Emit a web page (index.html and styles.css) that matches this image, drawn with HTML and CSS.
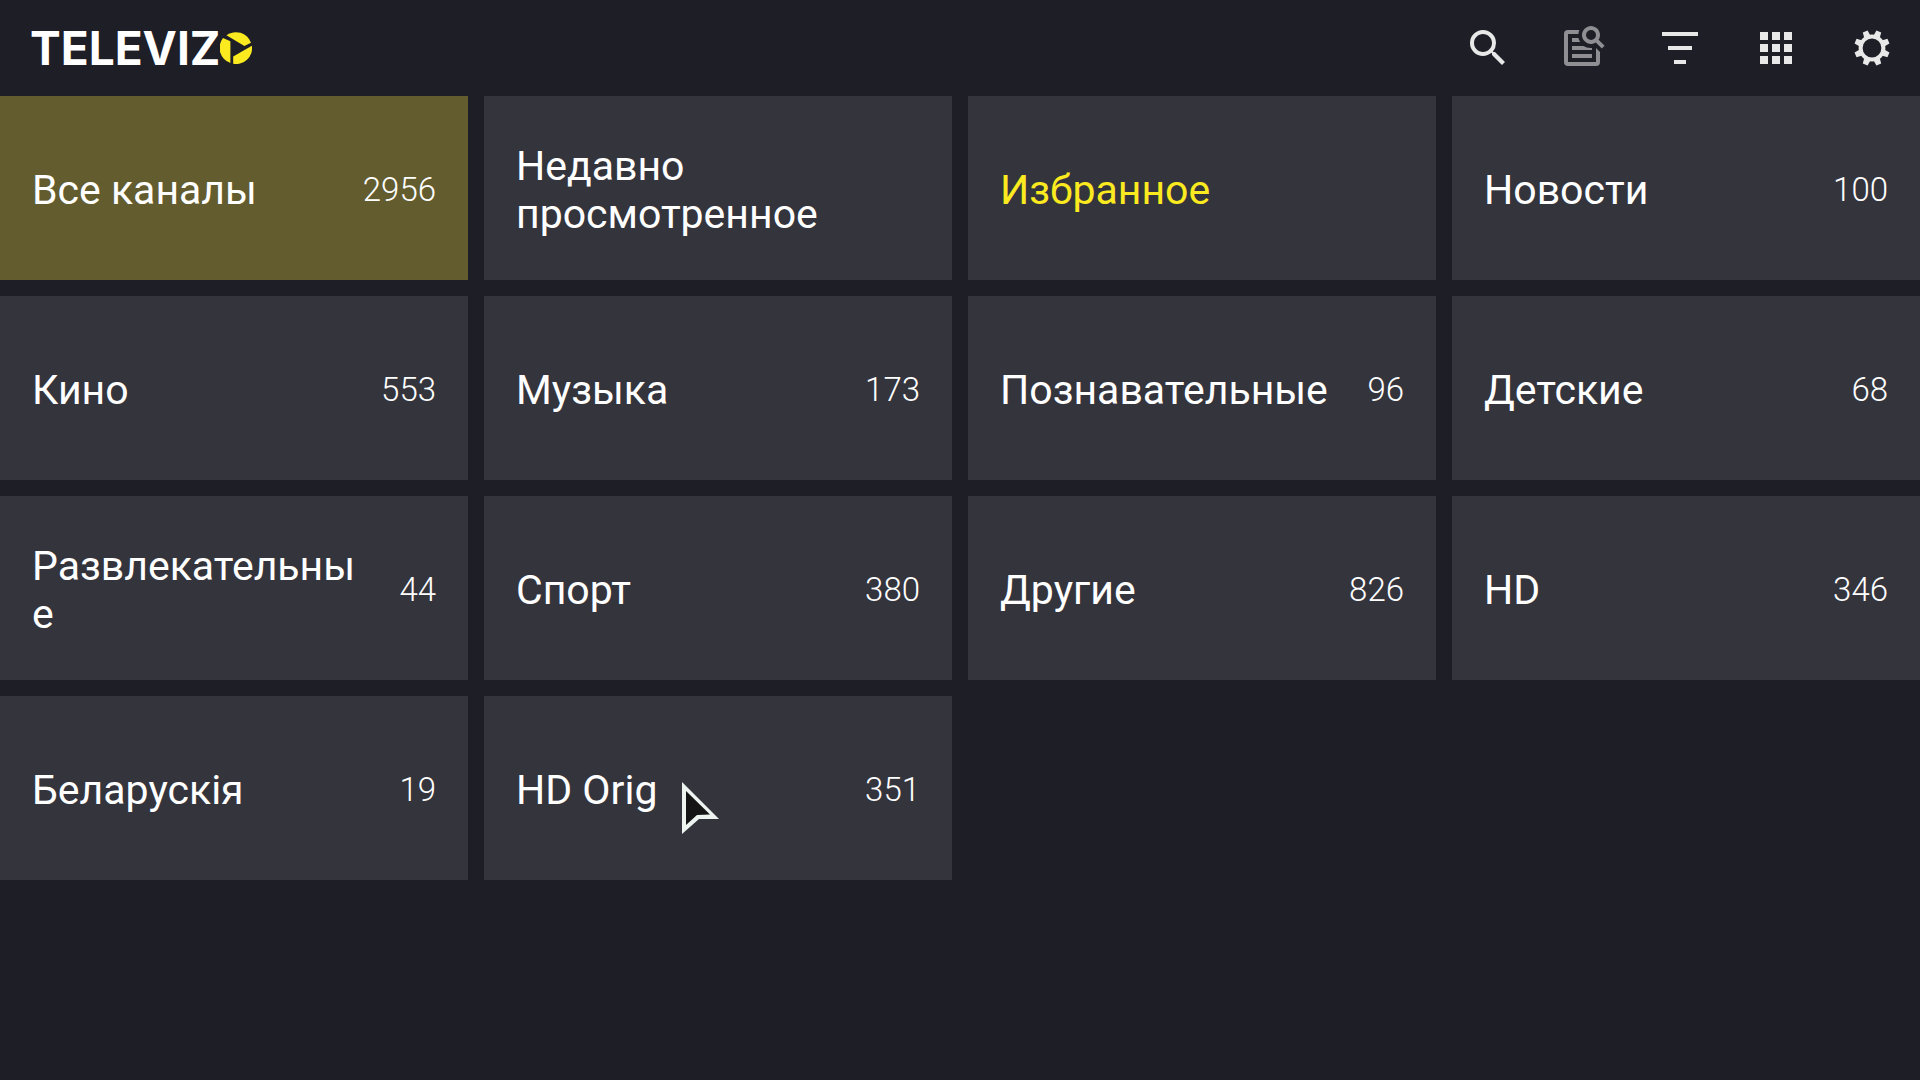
FILE: index.html
```html
<!DOCTYPE html>
<html lang="ru">
<head>
<meta charset="utf-8">
<meta name="viewport" content="width=device-width, initial-scale=1">
<title>Televizo</title>
<link rel="stylesheet" href="styles.css">
</head>
<body>
<header class="topbar">
  <a class="logo" href="#" aria-label="Televizo">
    <span class="logo-text">TELEVIZ</span>
    <svg class="logo-mark" viewBox="0 0 32 32" aria-hidden="true">
      <path d="M6.400 3.300A16 16 0 0 1 31 10.700L24.400 13.900Z"/>
      <path d="M3 6L10.400 9.300V31A16 16 0 0 1 3 6Z"/>
      <path d="M31.900 13.700A16 16 0 0 1 13.200 31.800V24.500Z"/>
    </svg>
  </a>
  <nav class="actions">
    <button class="action" type="button" aria-label="Поиск"><svg viewBox="0 0 24 24"><path d="M15.500 14h-.79l-.28-.27A6.471 6.471 0 0 0 16 9.500 6.500 6.500 0 1 0 9.500 16c1.610 0 3.090-.59 4.230-1.570l.27.28v.79l5 4.990L20.490 19l-4.990-5zm-6 0C7.010 14 5 11.990 5 9.500S7.010 5 9.500 5 14 7.010 14 9.500 11.990 14 9.500 14z"/></svg></button>
    <button class="action action-dim" type="button" aria-label="Поиск в программе"><svg viewBox="0 0 24 24"><path d="M9.700 3H4a2 2 0 0 0-2 2v14a2 2 0 0 0 2 2h14a2 2 0 0 0 2-2v-5l-2-2v7H4V5h5.200q0-1 .5-2zM6 7h3.200q.3 1.100.9 2H6zM6 11h5.700q1.800 1.200 4.300 1v1H6zM6 15h10v2H6z"/><path fill-rule="evenodd" d="M19.300 7.900A4.500 4.500 0 1 0 17.900 9.300L20.900 12.300 22.300 10.900ZM15.500 8a2.500 2.500 0 1 1 0-5 2.500 2.500 0 0 1 0 5z"/></svg></button>
    <button class="action" type="button" aria-label="Сортировка"><svg viewBox="0 0 24 24"><path d="M3 4h18v2H3zM6 11h12v2H6zM9 18h6v2H9z"/></svg></button>
    <button class="action" type="button" aria-label="Вид"><svg viewBox="0 0 24 24"><path d="M4 4h4v4H4zM10 4h4v4h-4zM16 4h4v4h-4zM4 10h4v4H4zM10 10h4v4h-4zM16 10h4v4h-4zM4 16h4v4H4zM10 16h4v4h-4zM16 16h4v4h-4z"/></svg></button>
    <button class="action" type="button" aria-label="Настройки"><svg viewBox="0 0 24 24">
      <circle class="ring" cx="12" cy="12" r="5.700"/>
      <defs><path id="tooth" d="M10.300 6.500L10.700 3.100H13.300L13.700 6.500Z"/></defs>
      <use href="#tooth" transform="rotate(22.500 12 12)"/>
      <use href="#tooth" transform="rotate(67.500 12 12)"/>
      <use href="#tooth" transform="rotate(112.500 12 12)"/>
      <use href="#tooth" transform="rotate(157.500 12 12)"/>
      <use href="#tooth" transform="rotate(202.500 12 12)"/>
      <use href="#tooth" transform="rotate(247.500 12 12)"/>
      <use href="#tooth" transform="rotate(292.500 12 12)"/>
      <use href="#tooth" transform="rotate(337.500 12 12)"/>
    </svg></button>
  </nav>
</header>
<main class="groups">
  <button class="group group-active" type="button"><span class="name">Все каналы</span><span class="count">2956</span></button>
  <button class="group" type="button"><span class="name">Недавно просмотренное</span></button>
  <button class="group group-favorite" type="button"><span class="name">Избранное</span></button>
  <button class="group" type="button"><span class="name">Новости</span><span class="count">100</span></button>
  <button class="group" type="button"><span class="name">Кино</span><span class="count">553</span></button>
  <button class="group" type="button"><span class="name">Музыка</span><span class="count">173</span></button>
  <button class="group" type="button"><span class="name">Познавательные</span><span class="count">96</span></button>
  <button class="group" type="button"><span class="name">Детские</span><span class="count">68</span></button>
  <button class="group" type="button"><span class="name">Развлекательные</span><span class="count">44</span></button>
  <button class="group" type="button"><span class="name">Спорт</span><span class="count">380</span></button>
  <button class="group" type="button"><span class="name">Другие</span><span class="count">826</span></button>
  <button class="group" type="button"><span class="name">HD</span><span class="count">346</span></button>
  <button class="group" type="button"><span class="name">Беларускія</span><span class="count">19</span></button>
  <button class="group" type="button"><span class="name">HD Orig</span><span class="count">351</span>
    <svg class="pointer" viewBox="0 0 38 53" aria-hidden="true"><path fill="#eef5f0" d="M0 0L37 37H17L0 52Z"/><path fill="#151515" d="M4 9L28 32.500L15 33L4 43Z"/></svg>
  </button>
</main>
</body>
</html>
```
FILE: styles.css
```css
* { box-sizing: border-box; }
body {
  margin: 0;
  background: #1e1e27;
  color: #fff;
  font-family: Roboto, "Noto Sans", sans-serif;
}
.topbar {
  display: flex;
  align-items: center;
  justify-content: space-between;
  height: 96px;
  padding: 0 24px 0 30px;
}
.logo {
  display: flex;
  align-items: center;
  color: #fff;
  text-decoration: none;
}
.logo-text {
  font: 700 46px/48px Inter, sans-serif;
}
.logo-mark { width: 32px; height: 32px; fill: #fbea20; }
.actions { display: flex; gap: 48px; }
.action {
  width: 48px;
  height: 48px;
  padding: 0;
  border: 0;
  background: none;
  color: #e8e8e9;
}
.action svg { display: block; width: 48px; height: 48px; fill: currentColor; }
.action-dim { color: #8e8e93; }
.ring { fill: none; stroke: currentColor; stroke-width: 2; }
.groups {
  display: grid;
  grid-template-columns: repeat(4, minmax(0, 1fr));
  grid-auto-rows: 184px;
  gap: 16px;
}
.group {
  position: relative;
  display: flex;
  align-items: center;
  gap: 32px;
  padding: 4px 32px 0;
  border: 0;
  background: #34343d;
  color: #fff;
  font-family: inherit;
  text-align: left;
}
.group-active { background: #635c2e; }
.group-favorite { color: #fbea20; }
.name {
  flex: 1;
  min-width: 0;
  font-size: 41px;
  line-height: 48px;
  overflow-wrap: anywhere;
}
.count { font-size: 33px; line-height: 40px; font-weight: 300; }
.pointer {
  position: absolute;
  left: 198px;
  top: 86px;
  width: 38px;
  height: 53px;
}
```
